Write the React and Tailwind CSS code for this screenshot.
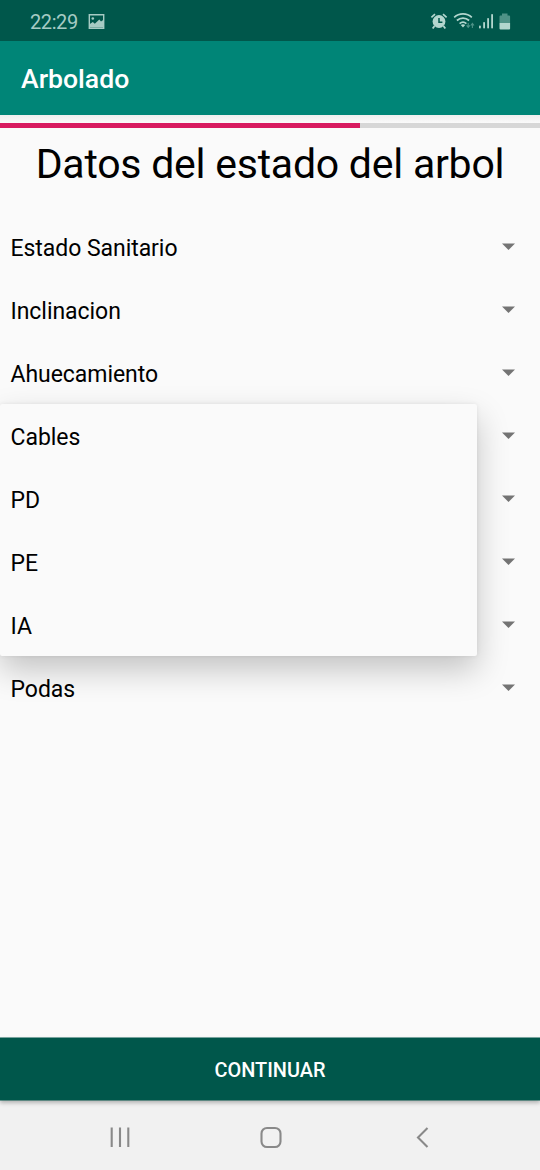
const rows = ["Estado Sanitario", "Inclinacion", "Ahuecamiento", "Cables", "PD", "PE", "IA", "Podas"];
const options = ["Cables", "PD", "PE", "IA"];

function StatusIcons() {
  return (
    <svg width="84" height="24" viewBox="430 9 84 24" fill="none" className="text-[#b3d6ce]">
      <circle cx="439" cy="20.5" r="6.4" fill="currentColor" />
      <path d="M431.4 16.4 435 13.2M446.6 16.4 443 13.2" stroke="currentColor" strokeWidth="1.7" />
      <path d="m434.5 25-1.8 2.5M443.5 25l1.8 2.5" stroke="currentColor" strokeWidth="1.8" />
      <path d="M439 17v4.2h3.4" stroke="#00574b" strokeWidth="1.5" />
      <g stroke="currentColor" strokeWidth="1.7">
        <path d="M454.2 16.3c5-4.6 12.6-4.6 17.6 0" />
        <path d="M456.9 19.5c3.5-3.2 8.7-3.2 12.2 0" />
        <path d="M459.6 22.6c2-1.8 4.8-1.8 6.8 0" />
      </g>
      <path d="m460.8 24 2.2 2.5 2.2-2.5c-1.3-1-3.1-1-4.4 0Z" fill="currentColor" />
      <path d="M468.2 22v4m-1.6-1.6 1.6 2 1.6-2M472.4 27v-4.5m-1.6 2 1.6-2 1.6 2" stroke="#4e9287" strokeWidth="1.1" />
      <g fill="currentColor">
        <rect x="479" y="24.5" width="1.8" height="3" rx=".8" />
        <rect x="483.2" y="21" width="1.8" height="6.5" rx=".8" />
        <rect x="487.2" y="17" width="1.8" height="10.5" rx=".8" />
        <rect x="491.2" y="13" width="1.8" height="14.5" rx=".8" />
      </g>
      <path d="M502 12.5h5.5v2h1.6q1 0 1 1V22h-10.6v-6.5q0-1 1-1h1.5Z" fill="#4e9287" />
      <path d="M499.5 22h10.6v5.6q0 1-1 1h-8.6q-1 0-1-1Z" fill="currentColor" />
    </svg>
  );
}

export default function App() {
  return (
    <div className="flex h-[1170px] w-[540px] flex-col overflow-hidden bg-[#fafafa] font-['Roboto',sans-serif] text-black">
      <header className="flex h-[41px] shrink-0 items-center justify-between bg-[#00574b] pt-[2px] pr-[26px] pl-[30px] text-[#a6cbc4]">
        <div className="flex items-center gap-[10px]">
          <span className="pt-px text-[20px] leading-6 tracking-[-0.4px]">22:29</span>
          <svg width="17" height="15" viewBox="0 0 17 15" fill="none" className="-mt-px">
            <path d="M1.3.8h14.4v13.4H1.3Z" stroke="currentColor" strokeWidth="1.4" />
            <path d="M1.5 10.2 4.8 8l2 1.8 4.5-4.4 1.7 2 2.5-1.6v7.7h-14Z" fill="currentColor" />
            <circle cx="4.8" cy="4.5" r="1.3" fill="currentColor" />
          </svg>
        </div>
        <StatusIcons />
      </header>
      <div className="flex h-[74px] shrink-0 items-center bg-[#008577] px-[21px] pt-[2px]">
        <h1 className="text-[26.6px] font-medium text-white">Arbolado</h1>
      </div>
      <div className="h-[7.5px] shrink-0 bg-linear-to-b from-[#eeeeee] to-[#fafafa]" />
      <div className="h-[5.5px] shrink-0 bg-[#d7d7d7]">
        <div className="h-full w-2/3 bg-[#d81b60]" />
      </div>
      <h2 className="h-[88px] shrink-0 pt-[11px] text-center text-[41px] leading-[50px] tracking-[-0.24px]">Datos del estado del arbol</h2>
      <main className="relative flex-1">
        {rows.map((label) => (
          <div key={label} className="flex h-[63px] items-center justify-between pr-[25px] pl-[10.5px] text-[23px] tracking-[-0.05px]">
            <span className="pt-[4px]">{label}</span>
            <svg width="13" height="7" viewBox="0 0 13 7" className="mb-[3px]">
              <path d="M0 .4h13L6.5 7Z" fill="#747474" />
            </svg>
          </div>
        ))}
        <ul className="absolute top-[188px] left-0 w-[477px] rounded-[2px] bg-[#fafafa] shadow-[0_14px_32px_rgba(0,0,0,0.22),0_0_4px_rgba(0,0,0,0.08)]">
          {options.map((label) => (
            <li key={label} className="flex h-[63px] items-center pt-[5px] pl-[10.5px] text-[23px] tracking-[-0.05px]">{label}</li>
          ))}
        </ul>
      </main>
      <button className="relative h-[63px] shrink-0 translate-y-[0.5px] bg-[#00574b] pt-[2px] text-[19.9px] font-medium text-white shadow-[0_2px_4px_rgba(0,0,0,0.25)]">
        CONTINUAR
      </button>
      <nav className="flex h-[70px] shrink-0 items-center bg-[#f1f1f1] pt-[5px] pl-[109px]">
        <svg width="324" height="24" viewBox="109 0 324 24" fill="none" stroke="#898989" strokeWidth="2.1">
          <path d="M111.7 1.5v19.5M120 1.5v19.5M128.3 1.5v19.5" />
          <rect x="261.5" y="2" width="19" height="19" rx="5.5" />
          <path d="m427.5 2-9.5 9.5 9.5 9.5" />
        </svg>
      </nav>
    </div>
  );
}
